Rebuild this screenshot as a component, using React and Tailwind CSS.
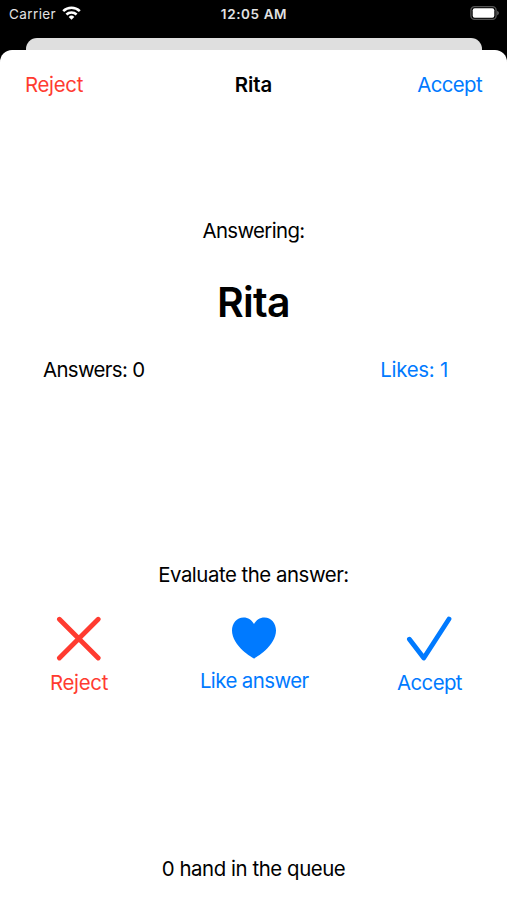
function StatusBar() {
  return (
    <div className="grid h-[38px] grid-cols-3 items-start bg-black px-[9px] pt-[4px] text-[13.5px] leading-5 text-[#e2e2e2]">
      <div className="flex items-center gap-[6px]">
        <span className="tracking-[0.4px]">Carrier</span>
        <svg className="mt-[-2px] h-[14px] w-[19px]" viewBox="0 0 19 14" fill="none" stroke="white" strokeWidth="2.6">
          <path d="M1.2 5.1a12 12 0 0 1 16.6 0" />
          <path d="M4.4 8.5a7.5 7.5 0 0 1 10.2 0" />
          <path d="M9.5 13.7 6.7 10.9a4 4 0 0 1 5.6 0Z" fill="white" stroke="none" />
        </svg>
      </div>
      <div className="pl-[1px] text-center font-semibold tracking-[0.6px]">12:05 AM</div>
      <svg className="mt-[2px] mr-[-3px] h-[15px] w-[31px] justify-self-end" viewBox="0 0 31 15">
        <rect x="0.9" y="0.7" width="25.2" height="12.6" rx="3.6" fill="black" stroke="#555" strokeWidth="1.3" />
        <rect x="2.7" y="2.3" width="21.6" height="9.4" rx="2" fill="white" />
        <path d="M27.2 4.8v4.6q1.7-.8 1.7-2.3T27.2 4.8Z" fill="#666" />
      </svg>
    </div>
  );
}

export default function App() {
  return (
    <div className="flex h-[900px] w-[507px] flex-col overflow-hidden bg-black font-[Inter,sans-serif] text-[20.4px] leading-6 text-black">
      <StatusBar />
      <div className="mx-[25.5px] h-[12px] shrink-0 rounded-t-[11px] bg-[#dfdfdf]" />
      <main className="flex flex-1 flex-col rounded-t-[12px] bg-white">
        <header className="mt-[23px] grid grid-cols-3 px-[25px]">
          <button className="text-left tracking-[-0.3px] text-[#ff3b30]">Reject</button>
          <h1 className="text-center font-semibold tracking-[-0.1px]">Rita</h1>
          <button className="text-right tracking-[-0.6px] text-[#007aff]">Accept</button>
        </header>
        <p className="mt-[122px] text-center tracking-[-0.65px]">Answering:</p>
        <h2 className="mt-[34px] text-center text-[41px] leading-[50px] font-semibold tracking-[-0.7px]">Rita</h2>
        <div className="mt-[31px] flex justify-between pr-[59px] pl-[43px]">
          <span className="tracking-[-0.65px]">Answers: 0</span>
          <span className="tracking-[-0.25px] text-[#007aff]">Likes: 1</span>
        </div>
        <p className="mt-[181px] text-center tracking-[-0.47px]">Evaluate the answer:</p>
        <div className="mt-[28px] flex items-start justify-between pr-[44.5px] pl-[49px]">
          <button className="flex w-[60px] flex-col items-center gap-[10px] text-[#ff3b30]">
            <svg className="h-[46px] w-[46px]" viewBox="0 0 46 46" fill="none" stroke="currentColor" strokeWidth="4.8" strokeLinecap="round">
              <path d="M3.4 4.2 42.2 43M42.2 4.2 3.4 43" />
            </svg>
            <span className="tracking-[-0.3px]">Reject</span>
          </button>
          <button className="ml-[3px] flex flex-col items-center gap-[8px] text-[#007aff]">
            <svg className="h-[46px] w-[46px]" viewBox="0 0 46 46" fill="currentColor">
              <path d="M23 43.4C21.8 43.4 1 31 1 15.6 1 8.4 5.8 2.5 12.5 2.5 17.2 2.5 21 5.1 23 9.1 25 5.1 28.8 2.5 33.5 2.5 40.2 2.5 45 8.4 45 15.6 45 31 24.2 43.4 23 43.4Z" />
            </svg>
            <span className="tracking-[-0.57px]">Like answer</span>
          </button>
          <button className="flex w-[66px] flex-col items-center gap-[10px] text-[#007aff]">
            <svg className="h-[46px] w-[46px]" viewBox="0 0 46 46" fill="none" stroke="currentColor" strokeWidth="4.8" strokeLinecap="round" strokeLinejoin="round">
              <path d="M3.4 24.2 17.8 43 43 4" />
            </svg>
            <span className="tracking-[-0.6px]">Accept</span>
          </button>
        </div>
        <p className="mt-[162px] text-center tracking-[-0.43px]">0 hand in the queue</p>
      </main>
    </div>
  );
}
